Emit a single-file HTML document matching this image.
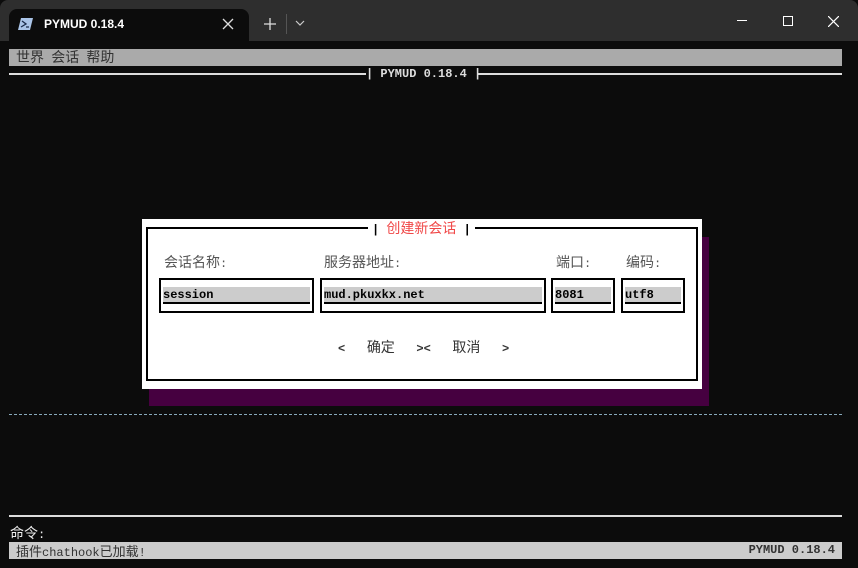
<!DOCTYPE html><html><head><meta charset="utf-8"><style>
*{margin:0;padding:0;box-sizing:border-box}
body{width:858px;height:568px;background:#0c0c0c;position:relative;overflow:hidden;font-family:"Liberation Mono","Noto Sans CJK SC",monospace;font-size:12px}
.a{position:absolute}
.cjk{font-family:"Noto Sans CJK SC","WenQuanYi Zen Hei",sans-serif;font-size:14px}
.m{font-family:"Liberation Mono",monospace;font-size:12px}
</style></head><body>
<div class="a" style="left:0;top:0;width:858px;height:41px;background:#2e2e2e;border-radius:8px 8px 0 0"></div>
<div class="a" style="left:9px;top:9px;width:240px;height:33px;background:#0c0c0c;border-radius:8px 8px 0 0"></div>
<svg class="a" style="left:18px;top:18px" width="15" height="12"><path d="M3 0H15L12 12H0Z" fill="#aac4e8"/><path d="M4 3L8 6L3 9M8 9H11" stroke="#1a2b4a" stroke-width="1.3" fill="none"/></svg>
<div class="a" style="left:44px;top:17px;color:#fff;font-family:'Liberation Sans',sans-serif;font-size:12px;font-weight:bold">PYMUD 0.18.4</div>
<svg class="a" style="left:222px;top:18px" width="12" height="12"><path d="M1 1L11 11M11 1L1 11" stroke="#ddd" stroke-width="1.3"/></svg>
<svg class="a" style="left:264px;top:18px" width="12" height="12"><path d="M6 0V12M0 6H12" stroke="#ddd" stroke-width="1.3"/></svg>
<div class="a" style="left:286px;top:14px;width:1px;height:20px;background:#555"></div>
<svg class="a" style="left:295px;top:20px" width="10" height="6"><path d="M1 1L5 5L9 1" stroke="#ccc" stroke-width="1.2" fill="none"/></svg>
<div class="a" style="left:737px;top:20px;width:10px;height:1px;background:#fff"></div>
<div class="a" style="left:783px;top:16px;width:10px;height:10px;border:1px solid #fff"></div>
<svg class="a" style="left:828px;top:16px" width="11" height="11"><path d="M0 0L11 11M11 0L0 11" stroke="#fff" stroke-width="1.2"/></svg>

<div class="a cjk" style="left:9px;top:49px;width:833px;height:17px;background:#aaa;color:#333;line-height:17px;padding-left:7px;white-space:pre">世界<span class="m"> </span>会话<span class="m"> </span>帮助</div>
<div class="a" style="left:9px;top:73px;width:357px;height:2px;background:#ddd"></div>
<div class="a" style="left:366px;top:66px;color:#ddd;line-height:16px;white-space:pre;font-weight:bold">| PYMUD 0.18.4 |</div>
<div class="a" style="left:477px;top:73px;width:365px;height:2px;background:#ddd"></div>

<div class="a" style="left:149px;top:237px;width:560px;height:169px;background:#460040"></div>
<div class="a" style="left:142px;top:219px;width:560px;height:170px;background:#fff"></div>
<div class="a" style="left:146px;top:227px;width:552px;height:154px;border:2px solid #000"></div>
<div class="a" style="left:368px;top:219px;background:#fff;padding:0 4px;color:#f04848;line-height:18px;white-space:pre"><span style="color:#000;font-weight:bold">|</span> <span class="cjk">创建新会话</span> <span style="color:#000;font-weight:bold">|</span></div>

<div class="a cjk" style="left:164px;top:252px;color:#555">会话名称<span class="m">:</span></div>
<div class="a cjk" style="left:324px;top:252px;color:#555">服务器地址<span class="m">:</span></div>
<div class="a cjk" style="left:556px;top:252px;color:#555">端口<span class="m">:</span></div>
<div class="a cjk" style="left:626px;top:252px;color:#555">编码<span class="m">:</span></div>

<div class="a" style="left:159px;top:278px;width:155px;height:35px;border:2px solid #000"></div>
<div class="a" style="left:163px;top:287px;width:147px;height:17px;background:#ccc;border-bottom:2px solid #000;line-height:17px;color:#000;font-weight:bold">session</div>
<div class="a" style="left:320px;top:278px;width:226px;height:35px;border:2px solid #000"></div>
<div class="a" style="left:324px;top:287px;width:218px;height:17px;background:#ccc;border-bottom:2px solid #000;line-height:17px;color:#000;font-weight:bold">mud.pkuxkx.net</div>
<div class="a" style="left:551px;top:278px;width:64px;height:35px;border:2px solid #000"></div>
<div class="a" style="left:555px;top:287px;width:56px;height:17px;background:#ccc;border-bottom:2px solid #000;line-height:17px;color:#000;font-weight:bold">8081</div>
<div class="a" style="left:621px;top:278px;width:64px;height:35px;border:2px solid #000"></div>
<div class="a" style="left:625px;top:287px;width:56px;height:17px;background:#ccc;border-bottom:2px solid #000;line-height:17px;color:#000;font-weight:bold">utf8</div>

<div class="a" style="left:338px;top:338px;color:#333;white-space:pre;line-height:18px;font-weight:bold">&lt;   <span class="cjk" style="font-weight:normal">确定</span>   &gt;&lt;   <span class="cjk" style="font-weight:normal">取消</span>   &gt;</div>

<div class="a" style="left:9px;top:414px;width:833px;border-top:1px dashed #8ab"></div>
<div class="a" style="left:9px;top:515px;width:833px;height:2px;background:#ddd"></div>
<div class="a cjk" style="left:10px;top:523px;color:#eee">命令<span class="m">:</span></div>
<div class="a" style="left:9px;top:542px;width:833px;height:17px;background:#ccc;color:#333;line-height:17px"><span class="cjk" style="padding-left:7px;font-size:13px">插件<span class="m">chathook</span>已加载<span class="m">!</span></span><span style="position:absolute;right:7px;font-weight:bold">PYMUD 0.18.4</span></div>
</body></html>
